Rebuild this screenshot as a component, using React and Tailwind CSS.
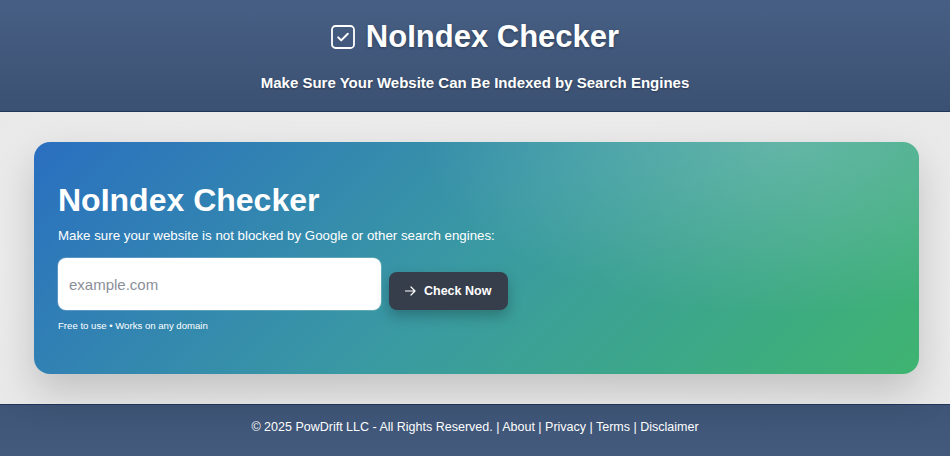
import React from 'react';

const CheckBoxIcon = () => (
  <svg width="24" height="24" viewBox="0 0 24 24" fill="none" className="shrink-0">
    <rect x="1" y="1" width="22" height="22" rx="3.5" stroke="white" strokeWidth="1.8" />
    <path d="M7.2 12.4l3 3L16.8 8.8" stroke="white" strokeWidth="2" strokeLinecap="round" strokeLinejoin="round" />
  </svg>
);

const App = () => {
  return (
    <div className="min-h-screen flex flex-col font-['Liberation_Sans',Arial,sans-serif] bg-[#ebebeb]">
      <header className="bg-gradient-to-b from-[#475f84] to-[#3b5173] border-b border-[#22365a] pt-[18px] pb-[18px] text-center text-white">
        <h1 className="flex items-center justify-center gap-[11px] text-[31px] leading-[38px] font-bold [text-shadow:0_1px_3px_rgba(0,0,0,0.35)]">
          <CheckBoxIcon />
          <span>NoIndex Checker</span>
        </h1>
        <p className="mt-[17px] text-[15px] leading-[20px] font-bold [text-shadow:0_1px_2px_rgba(0,0,0,0.35)]">
          Make Sure Your Website Can Be Indexed by Search Engines
        </p>
      </header>

      <main className="pt-[30px] pb-[30px] bg-[radial-gradient(ellipse_at_center,#f0f0f0_0%,#e9e9ea_100%)]">
        <section className="relative overflow-hidden ml-[34px] mr-[31px] h-[232px] rounded-[16px] bg-[linear-gradient(135deg,#2a6fc0_0%,#3a9aa2_50%,#3fb470_100%)] shadow-[0_18px_40px_rgba(0,0,0,0.18)] px-[24px] pt-[39px] text-white">
          <div className="absolute inset-0 bg-[radial-gradient(ellipse_55%_100%_at_85%_0%,rgba(255,255,255,0.2),transparent_75%)]" />
          <div className="relative">
            <h2 className="text-[32px] leading-[38px] font-bold">NoIndex Checker</h2>
            <p className="mt-[8px] text-[13.3px] leading-[18px]">
              Make sure your website is not blocked by Google or other search engines:
            </p>
            <div className="mt-[13px] flex items-end gap-[8px]">
              <input
                type="text"
                placeholder="example.com"
                className="w-[323px] h-[52px] rounded-[8px] bg-white border-2 border-white/40 px-[9px] text-[15px] text-gray-800 placeholder:text-[#8a8f98] outline-none shadow-[0_0_0_1px_rgba(255,255,255,0.2)]"
              />
              <button className="h-[38px] pl-[16px] pr-[17px] flex items-center gap-[8px] rounded-[8px] bg-[#363d4b] text-white text-[12.5px] font-bold shadow-[0_6px_14px_rgba(0,0,0,0.25)]">
                <svg width="11" height="10" viewBox="0 0 11 10" fill="none">
                  <path d="M0.5 5h9.5M6 1l4 4-4 4" stroke="white" strokeWidth="1.2" strokeLinecap="round" strokeLinejoin="round" />
                </svg>
                <span>Check Now</span>
              </button>
            </div>
            <p className="mt-[10px] text-[9.6px] leading-[12px]">Free to use • Works on any domain</p>
          </div>
        </section>
      </main>

      <footer className="flex-1 bg-gradient-to-b from-[#3e5577] to-[#435a7d] border-t border-[#22365a] pt-[14px] pb-[20px] text-center text-white text-[12.5px] leading-[16px]">
        © 2025 PowDrift LLC - All Rights Reserved. | About | Privacy | Terms | Disclaimer
      </footer>
    </div>
  );
};

export default App;
